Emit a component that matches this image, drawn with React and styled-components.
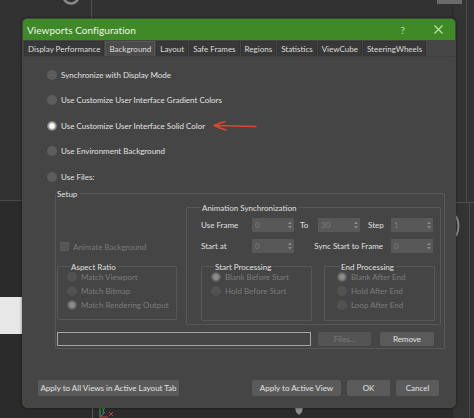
import React from "react";
import styled, { createGlobalStyle, css } from "styled-components";

const FONT = `Lato, "Open Sans", "Noto Sans", sans-serif`;

const GlobalStyle = createGlobalStyle`
  html, body { margin: 0; padding: 0; background: #2f2f2f; }
  body { width: 474px; height: 418px; overflow: hidden; font-family: ${FONT}; }
  * { box-sizing: border-box; }
`;

/* ---------- viewport canvas behind the dialog ---------- */
const Viewport = styled.div`
  position: relative;
  width: 474px;
  height: 418px;
  overflow: hidden;
  background: #323232;
  padding: 18px 0 0 22px;
`;
const LeftLowerPane = styled.div`
  position: absolute; left: 0; top: 200px; width: 30px; height: 218px;
  background: #2b2b2b; border-top: 1px solid #484848;
`;
const WhiteSwatch = styled.div`
  position: absolute; left: 0; top: 297px; width: 24px; height: 37px;
  background: #e7e7e7;
`;
const TopDivider = styled.div`
  position: absolute; left: 91px; top: 0; width: 1px; height: 20px; background: #505050;
`;
const BottomPane = styled.div`
  position: absolute; left: 0; top: 406px; width: 474px; height: 12px;
  background: #2b2b2b;
`;
const BottomDivider = styled.div`
  position: absolute; left: 92px; top: 406px; width: 1px; height: 12px; background: #555;
`;
const RightPane = styled.div`
  position: absolute; left: 452px; top: 0; width: 22px; height: 418px;
  background: #333;
  border-left: 1px solid #2a2a2a;
`;
const RightUpperLine = styled.div`
  position: absolute; left: 466px; top: 0; width: 1px; height: 202px; background: #474747;
`;
const RightHLine = styled.div`
  position: absolute; left: 452px; top: 202px; width: 22px; height: 1px; background: #505050;
`;
const RightLowerLine = styled.div`
  position: absolute; left: 469px; top: 202px; width: 1px; height: 216px; background: #4a4a4a;
`;
const TopRightLabel = styled.div`
  position: absolute; left: 437px; top: 0; width: 25px; height: 4px; background: #6b6b6b;
`;
const DecorSvg = styled.svg`
  position: absolute; display: block;
  left: ${(p) => p.$x}px; top: ${(p) => p.$y}px;
`;

/* ---------- dialog ---------- */
const Dialog = styled.div`
  position: relative;
  z-index: 1;
  width: 434px;
  height: 390px;
  display: flex;
  flex-direction: column;
  background: #454545;
  border: 1px solid #3d4b38;
  border-radius: 5px;
  overflow: hidden;
  font-family: ${FONT};
  font-size: 8px;
  color: #dcdcdc;
  box-shadow: 0 0 3px rgba(0,0,0,0.5);
`;
const TitleBar = styled.div`
  flex: none;
  height: 21px;
  display: flex;
  align-items: center;
  padding: 0 12px 0 4px;
  background: #3f8a27;
`;
const Title = styled.div`
  flex: 1;
  font-size: 10px;
  color: #eef5ea;
  letter-spacing: 0.05px;
`;
const HelpMark = styled.div`
  font-size: 10px;
  color: #bfe3aa;
  margin-right: 29px;
`;
const CloseIcon = styled.svg`
  display: block;
`;
const TabBar = styled.div`
  flex: none;
  height: 17px;
  display: flex;
  align-items: center;
  gap: 1px;
  padding: 0 0 0 1px;
  background: #464646;
  border-bottom: 1px solid #3e3e3e;
`;
const Tab = styled.div`
  height: 15px;
  display: flex;
  align-items: center;
  padding: 0 3px;
  background: ${(p) => (p.$active ? "#4b4b4b" : "#383838")};
  color: #dedede;
  white-space: nowrap;
  border: 1px solid ${(p) => (p.$active ? "#555" : "#333")};
  border-bottom: none;
`;
const Body = styled.div`
  flex: none;
  display: flex;
  flex-direction: column;
  padding: 0 0 0 24px;
`;
const ModeList = styled.div`
  padding-top: 5px;
  display: flex;
  flex-direction: column;
`;
const ModeRow = styled.div`
  height: 25.5px;
  display: flex;
  align-items: center;
  gap: 4px;
  color: #e2e2e2;
`;
const Radio = styled.span`
  flex: none;
  width: 10px;
  height: 10px;
  border-radius: 50%;
  background: ${(p) => (p.$disabled ? "#525252" : "#5d5d5d")};
  ${(p) =>
    p.$checked &&
    css`
      background: radial-gradient(
        circle,
        ${p.$disabled ? "#8c8c8c" : "#f6f6f6"} 0 2.3px,
        ${p.$disabled ? "#6e6e6e" : "#a8a8a8"} 3.4px,
        ${p.$disabled ? "#555" : "#6c6c6c"} 5px
      );
    `}
`;
const ArrowMark = styled.svg`
  display: block;
  margin-left: 3px;
`;

const Group = styled.fieldset`
  margin: 0;
  padding: 0;
  min-width: 0;
  border: 1px solid #575757;
  border-radius: 1px;
`;
const GroupTitle = styled.legend`
  padding: 0 2px 0 1px;
  margin-left: ${(p) => p.$indent || 0}px;
  font-size: 8px;
  line-height: 10px;
  color: #e0e0e0;
`;
const SetupGroup = styled(Group)`
  width: 390px;
  margin: -1px 0 0 8px;
  padding: 0 0 2px 0;
`;
const SetupGrid = styled.div`
  display: grid;
  grid-template-columns: 120px 255px;
  column-gap: 9px;
  padding: 4px 0 0 1px;
`;
const LeftColumn = styled.div`
  display: flex;
  flex-direction: column;
  padding-top: 38px;
`;
const CheckRow = styled.div`
  height: 12px;
  display: flex;
  align-items: center;
  gap: 4px;
  padding-left: 3px;
  color: #7a7a7a;
`;
const CheckBox = styled.span`
  width: 9px;
  height: 9px;
  background: #555;
  border: 1px solid #5a5a5a;
`;
const SmallGroup = styled(Group)`
  height: 58px;
  padding: 0 0 0 ${(p) => p.$pad}px;
`;
const AspectGroup = styled(SmallGroup)`
  margin-top: 9px;
`;
const OptionList = styled.div`
  display: flex;
  flex-direction: column;
  margin-top: -2px;
`;
const OptionRow = styled.div`
  height: 14px;
  display: flex;
  align-items: center;
  gap: 4px;
  color: #7c7c7c;
  white-space: nowrap;
`;
const AnimGroup = styled(Group)`
  padding: 0 0 3px 14px;
`;
const SpinGrid = styled.div`
  display: grid;
  grid-template-columns: 51px 42px 24px 42px 31px 42px;
  grid-template-rows: 15px 15px;
  row-gap: 6px;
  align-items: center;
  padding-top: 5px;
  color: #e0e0e0;
`;
const SpinLabel = styled.div`
  white-space: nowrap;
  padding-left: ${(p) => p.$pad || 0}px;
  ${(p) =>
    p.$wide &&
    css`
      grid-column: 3 / span 3;
      justify-self: end;
      padding-right: 8px;
    `}
`;
const Spinner = styled.div`
  height: 14px;
  display: flex;
  align-items: center;
  justify-content: space-between;
  padding: 0 2px 0 3px;
  background: #585858;
  color: #7d7d7d;
`;
const SpinArrows = styled.svg`
  display: block;
`;
const ProcRow = styled.div`
  display: flex;
  gap: 12px;
  margin-top: 8px;
`;
const ProcGroup = styled(SmallGroup)`
  width: ${(p) => p.$w}px;
  height: 59px;
`;
const FilesRow = styled.div`
  display: flex;
  align-items: center;
  margin: 7px 0 0 1px;
  height: 14px;
`;
const PathInput = styled.div`
  width: 254px;
  height: 14px;
  border: 1px solid #a4a4a4;
  background: #464646;
`;
const Button = styled.div`
  height: ${(p) => p.$h || 16}px;
  width: ${(p) => p.$w}px;
  margin-left: ${(p) => p.$ml || 0}px;
  display: flex;
  align-items: center;
  justify-content: center;
  border-radius: 2px;
  background: ${(p) => (p.$disabled ? "#545454" : "#5b5b5b")};
  color: ${(p) => (p.$disabled ? "#7c7c7c" : "#e2e2e2")};
  white-space: nowrap;
`;
const Footer = styled.div`
  margin-top: auto;
  display: flex;
  align-items: center;
  gap: 6px;
  padding: 0 16px 11px 15px;
`;
const Spacer = styled.div`
  flex: 1;
`;

const tabs = [
  "Display Performance",
  "Background",
  "Layout",
  "Safe Frames",
  "Regions",
  "Statistics",
  "ViewCube",
  "SteeringWheels",
];

const modes = [
  { label: "Synchronize with Display Mode" },
  { label: "Use Customize User Interface Gradient Colors" },
  { label: "Use Customize User Interface Solid Color", checked: true, marked: true },
  { label: "Use Environment Background" },
  { label: "Use Files:" },
];

function Spin({ value }) {
  return (
    <Spinner>
      <span>{value}</span>
      <SpinArrows width="4" height="8" viewBox="0 0 4 8">
        <path d="M0 3 L2 0.6 L4 3 Z M0 5 L2 7.4 L4 5 Z" fill="#8a8a8a" />
      </SpinArrows>
    </Spinner>
  );
}

function Options({ items }) {
  return (
    <OptionList>
      {items.map((o) => (
        <OptionRow key={o.label}>
          <Radio $disabled $checked={o.checked} />
          <span>{o.label}</span>
        </OptionRow>
      ))}
    </OptionList>
  );
}

export default function App() {
  return (
    <>
      <GlobalStyle />
      <Viewport>
        <LeftLowerPane />
        <WhiteSwatch />
        <TopDivider />
        <BottomPane />
        <BottomDivider />
        <RightPane />
        <RightUpperLine />
        <RightHLine />
        <RightLowerLine />
        <TopRightLabel />
        <DecorSvg $x={60} $y={-10} width="22" height="18" viewBox="0 0 22 18">
          <circle cx="11" cy="6" r="7.5" fill="none" stroke="#8a8a8a" strokeWidth="2.5" />
        </DecorSvg>
        <DecorSvg $x={450} $y={214} width="14" height="24" viewBox="0 0 14 24">
          <path d="M6 2 Q11 12 6 22" fill="none" stroke="#8a8a8a" strokeWidth="2" />
        </DecorSvg>
        <DecorSvg $x={96} $y={405} width="22" height="13" viewBox="0 0 22 13">
          <path d="M4 12 L4 3" stroke="#3fa84a" strokeWidth="1" />
          <path d="M4 12 L12 12" stroke="#c8443a" strokeWidth="1" />
          <path d="M4 12 L9 7" stroke="#4a6ad8" strokeWidth="1" />
          <path d="M6 2 L7.5 5 L9 2 M7.5 5 L7 8" stroke="#3fa84a" strokeWidth="0.9" fill="none" />
          <path d="M13 7 L17 11 M17 7 L13 11" stroke="#c8443a" strokeWidth="0.9" />
        </DecorSvg>
        <DecorSvg $x={294} $y={406} width="10" height="10" viewBox="0 0 10 10">
          <path d="M1 1 L9 1 L8 6 L5 9 L2 6 Z" fill="#8e8e8e" />
        </DecorSvg>

        <Dialog>
          <TitleBar>
            <Title>Viewports Configuration</Title>
            <HelpMark>?</HelpMark>
            <CloseIcon width="9" height="9" viewBox="0 0 9 9">
              <path d="M0.5 0.5 L8.5 8.5 M8.5 0.5 L0.5 8.5" stroke="#bfe3aa" strokeWidth="1.1" />
            </CloseIcon>
          </TitleBar>
          <TabBar>
            {tabs.map((t) => (
              <Tab key={t} $active={t === "Background"}>
                {t}
              </Tab>
            ))}
          </TabBar>
          <Body>
            <ModeList>
              {modes.map((m) => (
                <ModeRow key={m.label}>
                  <Radio $checked={m.checked} />
                  <span>{m.label}</span>
                  {m.marked && (
                    <ArrowMark width="46" height="12" viewBox="0 0 46 12">
                      <path
                        d="M2 5.5 L44 6.5 M2 5.5 Q7 3.5 13 1.5 M2 5.5 Q7 7.8 14 10"
                        fill="none"
                        stroke="#e0452e"
                        strokeWidth="1.4"
                        strokeLinecap="round"
                      />
                    </ArrowMark>
                  )}
                </ModeRow>
              ))}
            </ModeList>
            <SetupGroup>
              <GroupTitle>Setup</GroupTitle>
              <SetupGrid>
                <LeftColumn>
                  <CheckRow>
                    <CheckBox />
                    <span>Animate Background</span>
                  </CheckRow>
                  <AspectGroup $pad={9}>
                    <GroupTitle $indent={3}>Aspect Ratio</GroupTitle>
                    <Options
                      items={[
                        { label: "Match Viewport" },
                        { label: "Match Bitmap" },
                        { label: "Match Rendering Output", checked: true },
                      ]}
                    />
                  </AspectGroup>
                </LeftColumn>
                <AnimGroup>
                  <GroupTitle>Animation Synchronization</GroupTitle>
                  <SpinGrid>
                    <SpinLabel>Use Frame</SpinLabel>
                    <Spin value="0" />
                    <SpinLabel $pad={6}>To</SpinLabel>
                    <Spin value="30" />
                    <SpinLabel $pad={8}>Step</SpinLabel>
                    <Spin value="1" />
                    <SpinLabel>Start at</SpinLabel>
                    <Spin value="0" />
                    <SpinLabel $wide>Sync Start to Frame</SpinLabel>
                    <Spin value="0" />
                  </SpinGrid>
                  <ProcRow>
                    <ProcGroup $w={111} $pad={9}>
                      <GroupTitle $indent={3}>Start Processing</GroupTitle>
                      <Options
                        items={[
                          { label: "Blank Before Start", checked: true },
                          { label: "Hold Before Start" },
                        ]}
                      />
                    </ProcGroup>
                    <ProcGroup $w={111} $pad={12}>
                      <GroupTitle $indent={3}>End Processing</GroupTitle>
                      <Options
                        items={[
                          { label: "Blank After End", checked: true },
                          { label: "Hold After End" },
                          { label: "Loop After End" },
                        ]}
                      />
                    </ProcGroup>
                  </ProcRow>
                </AnimGroup>
              </SetupGrid>
              <FilesRow>
                <PathInput />
                <Button $w={53} $h={14} $ml={7} $disabled>
                  Files...
                </Button>
                <Button $w={54} $h={14} $ml={9}>
                  Remove
                </Button>
              </FilesRow>
            </SetupGroup>
          </Body>
          <Footer>
            <Button $w={141}>Apply to All Views in Active Layout Tab</Button>
            <Spacer />
            <Button $w={89}>Apply to Active View</Button>
            <Button $w={43}>OK</Button>
            <Button $w={43}>Cancel</Button>
          </Footer>
        </Dialog>
      </Viewport>
    </>
  );
}
